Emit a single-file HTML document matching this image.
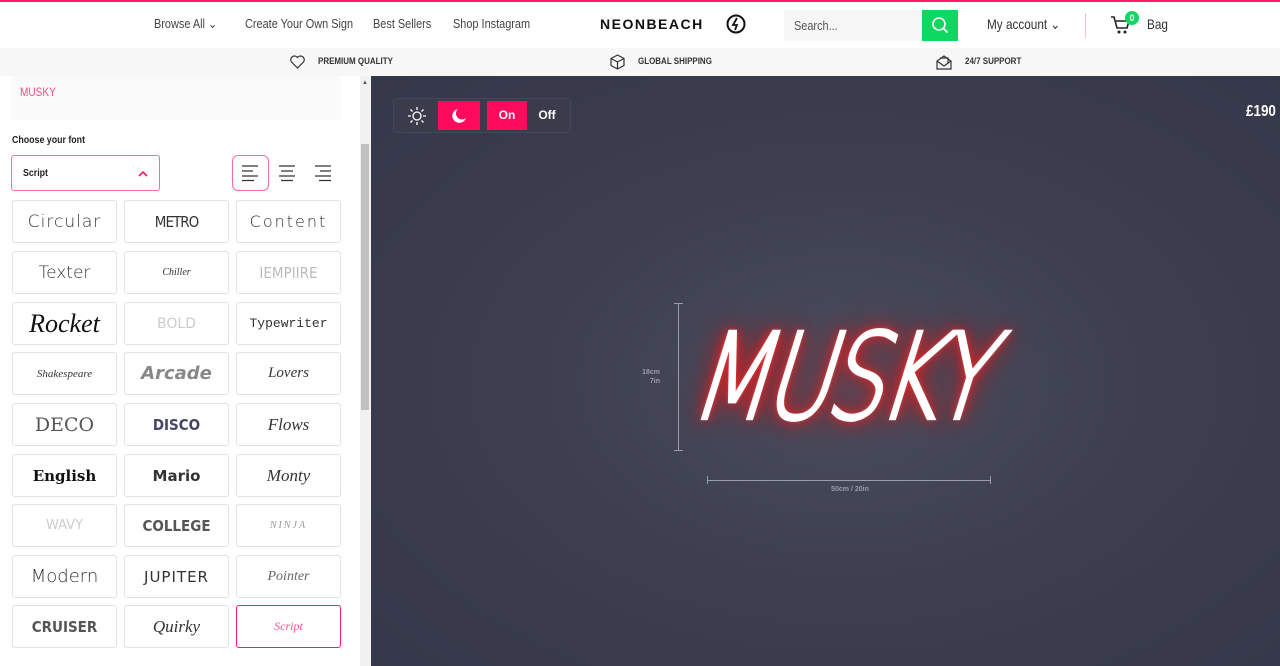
<!DOCTYPE html>
<html><head><meta charset="utf-8"><style>
*{margin:0;padding:0;box-sizing:border-box}
body{width:1280px;height:666px;overflow:hidden;font-family:"Liberation Sans",sans-serif;background:#fff;position:relative}
.topline{position:absolute;top:0;left:0;width:1280px;height:2px;background:#ff1a66}
.n{transform:scaleX(.84);transform-origin:left center;white-space:nowrap}
.nav{position:absolute;top:16px;font-size:13px;color:#444}
.bar{position:absolute;top:48px;left:0;width:1280px;height:28px;background:#f7f7f7}
.bar span{position:absolute;top:8px;font-size:9.5px;font-weight:bold;color:#333;transform:scaleX(.84);transform-origin:left center}
.left{position:absolute;top:76px;left:0;width:360px;height:590px;background:#fff}
.scroll{position:absolute;top:76px;left:360px;width:11px;height:590px;background:#f1f1f1}
.thumb{position:absolute;top:144px;left:361px;width:8px;height:266px;background:#c1c1c1}
.dark{position:absolute;top:76px;left:371px;width:909px;height:590px;background:radial-gradient(ellipse at 52% 52%,#4a4d5e 0%,#3d3f50 45%,#35374a 100%)}
.cell{position:absolute;width:105px;height:43px;border:1px solid #e2e2e2;border-radius:3px;display:flex;align-items:center;justify-content:center;font-size:17px;color:#333}
.sel{border:1px solid #ff1a66}
</style></head><body>
<div class="topline"></div>
<div class="nav n" style="left:154px">Browse All &#8964;</div>
<div class="nav n" style="left:245px">Create Your Own Sign</div>
<div class="nav n" style="left:373px">Best Sellers</div>
<div class="nav n" style="left:453px">Shop Instagram</div>
<div style="position:absolute;left:600px;top:16px;font-size:14px;font-weight:900;letter-spacing:1.5px;color:#111">NEONBEACH</div>
<svg style="position:absolute;left:726px;top:14px" width="20" height="20" viewBox="0 0 20 20"><circle cx="10" cy="10" r="8.5" fill="none" stroke="#111" stroke-width="2"/><path d="M11 4L7 11h4l-2 5" fill="none" stroke="#111" stroke-width="1.8"/></svg>
<div style="position:absolute;left:784px;top:10px;width:140px;height:31px;background:#f6f6f6"></div>
<div class="n" style="position:absolute;left:794px;top:18px;font-size:13px;color:#555">Search...</div>
<div style="position:absolute;left:922px;top:10px;width:36px;height:31px;background:#0fd862"><svg width="36" height="31" viewBox="0 0 36 31"><circle cx="17" cy="14" r="6" fill="none" stroke="#fff" stroke-width="1.6"/><path d="M21.5 18.5l4 4" stroke="#fff" stroke-width="1.8"/></svg></div>
<div class="nav n" style="left:987px;color:#333;font-size:14px">My account &#8964;</div>
<div style="position:absolute;left:1085px;top:13px;width:1px;height:25px;background:#f3c0d0"></div>
<svg style="position:absolute;left:1110px;top:15px" width="22" height="20" viewBox="0 0 22 20"><path d="M1 2h3l3 11h10l2-7H6" fill="none" stroke="#222" stroke-width="1.6"/><circle cx="9" cy="17" r="1.5" fill="#222"/><circle cx="15" cy="17" r="1.5" fill="#222"/></svg>
<div style="position:absolute;left:1125px;top:11px;width:14px;height:14px;border-radius:50%;background:#0fd862;color:#fff;font-size:9px;font-weight:bold;text-align:center;line-height:14px">0</div>
<div class="nav n" style="left:1147px;color:#333;font-size:14px">Bag</div>
<div class="bar">
<svg style="position:absolute;left:290px;top:7px" width="15" height="14" viewBox="0 0 15 14"><path d="M7.5 13L1.5 7A3.5 3.5 0 017.5 2.5 3.5 3.5 0 0113.5 7z" fill="none" stroke="#333" stroke-width="1.2"/></svg>
<span style="left:318px">PREMIUM QUALITY</span>
<svg style="position:absolute;left:610px;top:6px" width="15" height="16" viewBox="0 0 15 16"><path d="M7.5 1L14 4.5v7L7.5 15 1 11.5v-7zM1 4.5l6.5 3.5 6.5-3.5M7.5 8v7" fill="none" stroke="#333" stroke-width="1.2"/></svg>
<span style="left:638px">GLOBAL SHIPPING</span>
<svg style="position:absolute;left:936px;top:6px" width="16" height="16" viewBox="0 0 16 16"><path d="M1 7v8h14V7L8 2zM1 7l7 5 7-5M4 4h8v5" fill="none" stroke="#333" stroke-width="1.2"/></svg>
<span style="left:965px">24/7 SUPPORT</span>
</div>
<div class="left">
<div style="position:absolute;left:11px;top:0;width:330px;height:44px;background:#fafafa"></div>
<div class="n" style="position:absolute;left:20px;top:9px;font-size:12px;color:#ff4f84">MUSKY</div>
<div class="n" style="position:absolute;left:12px;top:58px;font-size:10.5px;font-weight:bold;color:#222">Choose your font</div>
<div style="position:absolute;left:11px;top:79px;width:149px;height:36px;border:1px solid #ff6b9a;border-radius:3px"><svg style="position:absolute;right:11px;top:14px" width="10" height="7" viewBox="0 0 10 7"><path d="M1 6l4-4 4 4" fill="none" stroke="#ff1a66" stroke-width="1.6"/></svg></div>
<div class="n" style="position:absolute;left:23px;top:91px;font-size:10.5px;font-weight:bold;color:#222">Script</div>
<div style="position:absolute;left:232px;top:79px;width:37px;height:36px;border:1px solid #ff6b9a;border-radius:6px"></div>
<svg style="position:absolute;left:241px;top:89px" width="100" height="17" viewBox="0 0 100 17"><g stroke="#333" stroke-width="1.3"><path d="M1 1h16M1 6h11M1 11h16M1 15.5h12"/><path d="M38 1h16M40 6h12M38 11h16M40 15.5h12"/><path d="M74 1h16M79 6h11M74 11h16M78 15.5h12"/></g></svg>
</div>
<div class="scroll"></div><div class="thumb"></div>
<div style="position:absolute;left:362px;top:80px;font-size:6px;color:#555">&#9650;</div>
<div id="grid"></div>
<div class="dark"></div>
<div style="position:absolute;left:393px;top:98px;width:178px;height:35px;background:#3a3c4c;border:1px solid #44465a;border-radius:3px"></div>
<svg style="position:absolute;left:407px;top:106px" width="20" height="20" viewBox="0 0 20 20"><circle cx="10" cy="10" r="4" fill="none" stroke="#fff" stroke-width="1.3"/><g stroke="#fff" stroke-width="1.3"><path d="M10 1v3M10 16v3M1 10h3M16 10h3M3.5 3.5l2 2M14.5 14.5l2 2M3.5 16.5l2-2M14.5 5.5l2-2"/></g></svg>
<div style="position:absolute;left:438px;top:101px;width:42px;height:29px;background:#ff0a5c"></div>
<svg style="position:absolute;left:450px;top:107px" width="18" height="18" viewBox="0 0 18 18"><path d="M8 2a7 7 0 108 9 5.5 5.5 0 01-8-9z" fill="#fff"/></svg>
<div style="position:absolute;left:487px;top:101px;width:40px;height:29px;background:#ff0a5c;color:#fff;font-size:12px;font-weight:bold;text-align:center;line-height:29px">On</div>
<div style="position:absolute;left:527px;top:101px;width:40px;height:29px;color:#fff;font-size:12px;font-weight:bold;text-align:center;line-height:29px">Off</div>
<div class="n" style="position:absolute;left:1246px;top:103px;font-size:16px;font-weight:bold;color:#fff">£190</div>
<div style="position:absolute;left:678px;top:303px;width:1px;height:148px;background:#9a9cac"></div>
<div style="position:absolute;left:674px;top:303px;width:9px;height:1px;background:#9a9cac"></div>
<div style="position:absolute;left:674px;top:450px;width:9px;height:1px;background:#9a9cac"></div>
<div style="position:absolute;left:630px;top:368px;width:30px;text-align:right;font-size:7px;font-weight:bold;color:#9a9cac;line-height:9px">18cm<br>7in</div>
<div style="position:absolute;left:707px;top:480px;width:284px;height:1px;background:#9a9cac"></div>
<div style="position:absolute;left:707px;top:476px;width:1px;height:8px;background:#9a9cac"></div>
<div style="position:absolute;left:990px;top:476px;width:1px;height:8px;background:#9a9cac"></div>
<div style="position:absolute;left:800px;top:486px;width:100px;text-align:center;font-size:7px;font-weight:bold;color:#9a9cac">50cm / 20in</div>
<div style="position:absolute;left:700px;top:318px;font-family:'DejaVu Sans',sans-serif;font-weight:200;font-size:92px;letter-spacing:-6px;color:#fff;line-height:120px;transform:scaleY(1.3) skewX(-22deg);transform-origin:left center;-webkit-text-stroke:2.5px #fff;text-shadow:0 0 3px #ff6a6a,0 0 8px #ff2020,0 0 16px #ff1a1a,0 0 28px #e00000">MUSKY</div>
<script>
var f=[["Circular","font-family:'DejaVu Sans';font-weight:200;letter-spacing:1px"],["METRO","font-family:'DejaVu Sans Condensed';font-weight:200;font-size:15px;letter-spacing:-1px"],["Content","font-family:'DejaVu Sans';font-weight:200;letter-spacing:2px;font-size:16px"],
["Texter","font-family:'DejaVu Sans';font-weight:200"],["Chiller","font-family:'Liberation Serif';font-style:italic;font-size:10px"],["IEMPIIRE","font-family:'DejaVu Sans Condensed';font-weight:200;color:#bbb;font-size:15px"],
["Rocket","font-family:'Liberation Serif';font-style:italic;font-size:26px;color:#111"],["BOLD","font-family:'DejaVu Sans';color:#ccc;font-size:14px"],["Typewriter","font-family:'Liberation Mono';font-size:13px"],
["Shakespeare","font-family:'Liberation Serif';font-style:italic;font-size:11px"],["Arcade","font-family:'DejaVu Sans';font-style:italic;font-weight:bold;color:#888;font-size:18px"],["Lovers","font-family:'Liberation Serif';font-style:italic;font-size:15px"],
["DECO","font-family:'DejaVu Serif';font-weight:200;font-size:19px;color:#555"],["DISCO","font-family:'DejaVu Sans Condensed';font-weight:bold;color:#446;font-size:15px"],["Flows","font-family:'Liberation Serif';font-style:italic;font-size:17px"],
["English","font-family:'DejaVu Serif';font-weight:bold;font-size:15px;color:#111"],["Mario","font-family:'DejaVu Sans';font-weight:bold;font-size:15px"],["Monty","font-family:'Liberation Serif';font-style:italic;font-size:17px"],
["WAVY","font-family:'DejaVu Sans';color:#ccc;font-size:13px"],["COLLEGE","font-family:'DejaVu Sans Condensed';font-weight:bold;color:#555;font-size:15px"],["NINJA","font-family:'Liberation Serif';font-style:italic;font-size:10px;color:#999;letter-spacing:2px"],
["Modern","font-family:'DejaVu Sans';font-weight:200;font-size:18px"],["JUPITER","font-family:'DejaVu Sans';font-size:15px;letter-spacing:1px"],["Pointer","font-family:'Liberation Serif';font-style:italic;font-size:14px;color:#666"],
["CRUISER","font-family:'DejaVu Sans Condensed';font-weight:bold;font-size:15px;color:#555"],["Quirky","font-family:'Liberation Serif';font-style:italic;font-size:17px"],["Script","font-family:'Liberation Serif';font-style:italic;font-size:12px;color:#ff4f84"]];
var r=[200,251,302,352,403,454,504,555,605],c=[12,124,236],h="";
f.forEach(function(x,i){h+='<div class="cell'+(i==26?' sel':'')+'" style="left:'+c[i%3]+'px;top:'+r[Math.floor(i/3)]+'px;"><span style="'+x[1]+'">'+x[0]+'</span></div>'});
document.getElementById("grid").innerHTML=h;
</script>
</body></html>
